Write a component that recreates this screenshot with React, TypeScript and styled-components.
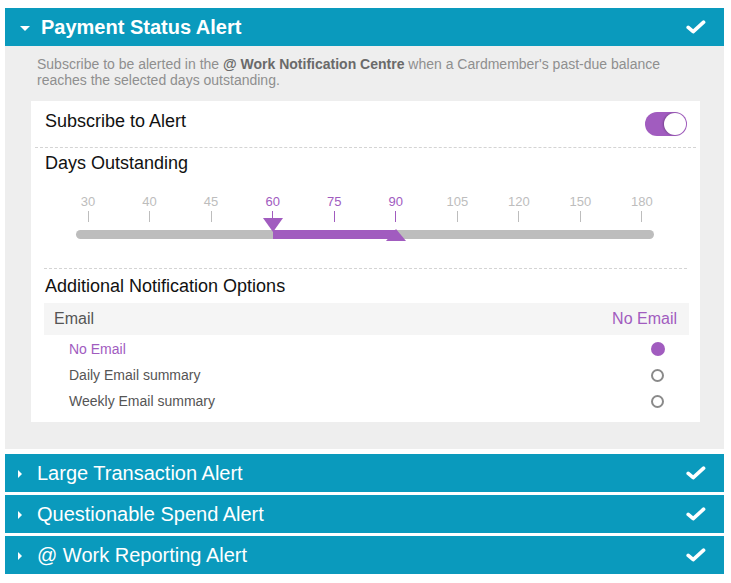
import React from "react";
import styled, { createGlobalStyle, css } from "styled-components";

const PURPLE = "#a15cbf";
const TEAL = "#0a9abd";

const GlobalStyle = createGlobalStyle`
  html, body {
    margin: 0;
    padding: 0;
    background: #fff;
  }
  body {
    font-family: "Liberation Sans", Arial, sans-serif;
  }
`;

const TICKS = [30, 40, 45, 60, 75, 90, 105, 120, 150, 180];
const TRACK_WIDTH = 578;
const TICK_WIDTH = 24;
const STEP = (TRACK_WIDTH - TICK_WIDTH) / (TICKS.length - 1);
const tickX = (i: number) => TICK_WIDTH / 2 + i * STEP;

const Page = styled.div`
  padding: 8px 7px 0 5px;
  display: flex;
  flex-direction: column;
`;

const AlertHeader = styled.div<{ expanded?: boolean; gap?: number }>`
  height: 38px;
  background: ${TEAL};
  display: flex;
  align-items: center;
  color: #fff;
  padding: 0 18px 0 ${({ expanded }) => (expanded ? "15px" : "12px")};
  margin-top: ${({ gap = 0 }) => gap}px;
`;

const Caret = styled.span<{ open?: boolean }>`
  width: 0;
  height: 0;
  ${({ open }) =>
    open
      ? css`
          border-left: 5px solid transparent;
          border-right: 5px solid transparent;
          border-top: 5px solid #fff;
          margin-right: 11px;
          margin-top: 2px;
        `
      : css`
          border-top: 4px solid transparent;
          border-bottom: 4px solid transparent;
          border-left: 4px solid #fff;
          margin-right: 15px;
          margin-left: 1px;
          margin-top: 2px;
        `}
`;

const Title = styled.span<{ bold?: boolean }>`
  flex: 1;
  font-size: 20px;
  font-weight: ${({ bold }) => (bold ? 700 : 400)};
  white-space: nowrap;
`;

const CheckIcon = () => (
  <svg width="20" height="14" viewBox="0 0 20 14">
    <path
      d="M2.2 7.4 L7.2 11.6 L17.6 2.2"
      fill="none"
      stroke="#fff"
      strokeWidth="3.6"
      strokeLinecap="round"
      strokeLinejoin="round"
    />
  </svg>
);

const Panel = styled.div`
  background: #eeeeee;
  padding: 11px 24px 27px 26px;
`;

const Description = styled.p`
  margin: 0 0 13px 6px;
  font-size: 14px;
  line-height: 15.5px;
  color: #8f8f8f;
  b {
    color: #6a6a6a;
  }
`;

const Card = styled.div`
  background: #fff;
  padding-bottom: 8px;
`;

const SubscribeRow = styled.div`
  height: 46px;
  display: flex;
  align-items: center;
  justify-content: space-between;
  padding: 0 9px 0 10px;
  margin: 0 4px;
  border-bottom: 1px dashed #d4d4d4;
`;

const RowLabel = styled.span`
  font-size: 18px;
  color: #111;
  padding-bottom: 5px;
`;

const Toggle = styled.span`
  width: 42px;
  height: 24px;
  border-radius: 12px;
  background: ${PURPLE};
  display: flex;
  justify-content: flex-end;
  align-items: center;
  padding: 1px;
  box-sizing: border-box;
  &::after {
    content: "";
    width: 22px;
    height: 22px;
    border-radius: 50%;
    background: #fff;
    box-shadow: -1px 0 2px rgba(0, 0, 0, 0.25);
  }
`;

const DaysSection = styled.div`
  padding: 4px 0 29px;
  margin: 0 13px;
  border-bottom: 1px dashed #d4d4d4;
`;

const SectionLabel = styled.div`
  font-size: 18px;
  line-height: 22px;
  color: #111;
  padding-left: 1px;
`;

const Slider = styled.div`
  width: ${TRACK_WIDTH}px;
  margin: 20px 0 0 32px;
`;

const TickRow = styled.div`
  display: flex;
  justify-content: space-between;
`;

const Tick = styled.div<{ active?: boolean }>`
  width: ${TICK_WIDTH}px;
  display: flex;
  flex-direction: column;
  align-items: center;
  color: ${({ active }) => (active ? PURPLE : "#bdbdbd")};
  font-size: 13px;
  line-height: 15px;
  &::after {
    content: "";
    width: 1px;
    height: 11px;
    margin-top: 2px;
    background: currentColor;
  }
`;

const Track = styled.div`
  position: relative;
  height: 9px;
  border-radius: 5px;
  background: #bdbdbd;
  margin-top: 8px;
`;

const TrackFill = styled.div`
  position: absolute;
  top: 0;
  bottom: 0;
  background: ${PURPLE};
`;

const Handle = styled.div<{ up?: boolean }>`
  position: absolute;
  width: 0;
  height: 0;
  margin-left: -10px;
  border-left: 10px solid transparent;
  border-right: 10px solid transparent;
  ${({ up }) =>
    up
      ? css`
          top: -1px;
          border-bottom: 12px solid ${PURPLE};
        `
      : css`
          top: -12px;
          border-top: 14px solid ${PURPLE};
        `}
`;

const OptionsSection = styled.div`
  padding: 6px 11px 0 13px;
`;

const EmailHeader = styled.div`
  margin-top: 6px;
  height: 32px;
  background: #f5f5f5;
  display: flex;
  align-items: center;
  justify-content: space-between;
  padding: 0 12px 0 10px;
  font-size: 16px;
  color: #555;
`;

const Selected = styled.span`
  color: ${PURPLE};
`;

const OptionList = styled.div`
  padding: 1px 35px 0 38px;
`;

const OptionRow = styled.div<{ checked?: boolean }>`
  height: 26px;
  display: flex;
  align-items: center;
  justify-content: space-between;
  font-size: 14px;
  color: ${({ checked }) => (checked ? PURPLE : "#555")};
`;

const Radio = styled.span<{ checked?: boolean }>`
  width: 14px;
  height: 14px;
  border-radius: 50%;
  box-sizing: border-box;
  ${({ checked }) =>
    checked
      ? css`
          background: ${PURPLE};
        `
      : css`
          border: 2px solid #8a8a8a;
          width: 13px;
          height: 13px;
          margin-right: 1px;
        `}
`;

const OPTIONS = ["No Email", "Daily Email summary", "Weekly Email summary"];
const COLLAPSED = [
  "Large Transaction Alert",
  "Questionable Spend Alert",
  "@ Work Reporting Alert",
];

export default function App() {
  const low = 3;
  const high = 5;
  return (
    <>
      <GlobalStyle />
      <Page>
        <AlertHeader expanded>
          <Caret open />
          <Title bold>Payment Status Alert</Title>
          <CheckIcon />
        </AlertHeader>
        <Panel>
          <Description>
            Subscribe to be alerted in the <b>@ Work Notification Centre</b>{" "}
            when a Cardmember's past-due balance reaches the selected days
            outstanding.
          </Description>
          <Card>
            <SubscribeRow>
              <RowLabel>Subscribe to Alert</RowLabel>
              <Toggle />
            </SubscribeRow>
            <DaysSection>
              <SectionLabel>Days Outstanding</SectionLabel>
              <Slider>
                <TickRow>
                  {TICKS.map((t, i) => (
                    <Tick key={t} active={i >= low && i <= high}>
                      {t}
                    </Tick>
                  ))}
                </TickRow>
                <Track>
                  <TrackFill
                    style={{
                      left: tickX(low),
                      width: tickX(high) - tickX(low),
                    }}
                  />
                  <Handle style={{ left: tickX(low) }} />
                  <Handle up style={{ left: tickX(high) }} />
                </Track>
              </Slider>
            </DaysSection>
            <OptionsSection>
              <SectionLabel>Additional Notification Options</SectionLabel>
              <EmailHeader>
                <span>Email</span>
                <Selected>No Email</Selected>
              </EmailHeader>
            </OptionsSection>
            <OptionList>
              {OPTIONS.map((o, i) => (
                <OptionRow key={o} checked={i === 0}>
                  <span>{o}</span>
                  <Radio checked={i === 0} />
                </OptionRow>
              ))}
            </OptionList>
          </Card>
        </Panel>
        {COLLAPSED.map((c, i) => (
          <AlertHeader key={c} gap={i === 0 ? 5 : 3}>
            <Caret />
            <Title>{c}</Title>
            <CheckIcon />
          </AlertHeader>
        ))}
      </Page>
    </>
  );
}
